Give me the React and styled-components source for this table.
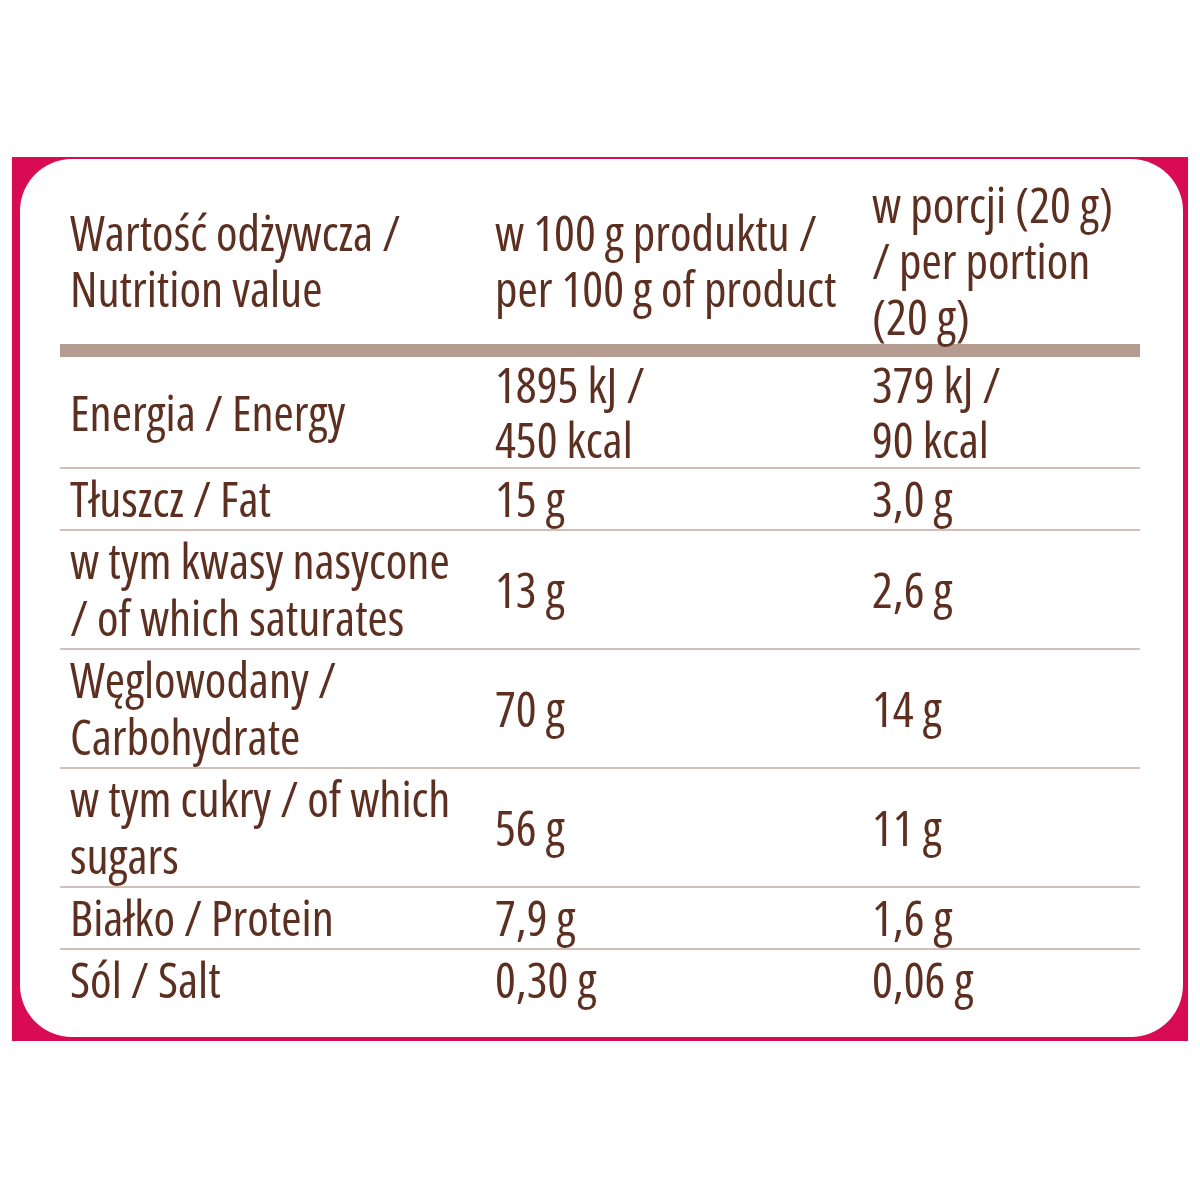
import React from 'react';
import styled, {createGlobalStyle} from 'styled-components';

const GlobalStyle = createGlobalStyle`
  body {
    margin: 0;
    background: #ffffff;
  }
`;

const rows = [
    {name: ['Energia / Energy'], per100: ['1895 kJ /', '450 kcal'], portion: ['379 kJ /', '90 kcal'], tight: true},
    {name: ['Tłuszcz / Fat'], per100: ['15 g'], portion: ['3,0 g']},
    {name: ['w tym kwasy nasycone', '/ of which saturates'], per100: ['13 g'], portion: ['2,6 g']},
    {name: ['Węglowodany /', 'Carbohydrate'], per100: ['70 g'], portion: ['14 g']},
    {name: ['w tym cukry / of which', 'sugars'], per100: ['56 g'], portion: ['11 g']},
    {name: ['Białko / Protein'], per100: ['7,9 g'], portion: ['1,6 g']},
    {name: ['Sól / Salt'], per100: ['0,30 g'], portion: ['0,06 g']},
];

const Lines = ({lines}) => lines.map((line, i) => <Line key={i}>{line}</Line>);

const App = () => {
    return (
        <Page>
            <GlobalStyle/>
            <Frame>
                <Card>
                    <Table>
                        <colgroup>
                            <col style={{width: 425}}/>
                            <col style={{width: 377}}/>
                            <col style={{width: 278}}/>
                        </colgroup>
                        <thead>
                            <tr>
                                <HeadCell><Lines lines={['Wartość odżywcza /', 'Nutrition value']}/></HeadCell>
                                <HeadCell><Lines lines={['w 100 g produktu /', 'per 100 g of product']}/></HeadCell>
                                <HeadCell><Lines lines={['w porcji (20 g)', '/ per portion', '(20 g)']}/></HeadCell>
                            </tr>
                        </thead>
                        <tbody>
                            {rows.map((row, rowIndex) => (
                                <Row key={rowIndex} isLast={rowIndex === rows.length - 1} tight={row.tight}>
                                    <Cell><Lines lines={row.name}/></Cell>
                                    <Cell><Lines lines={row.per100}/></Cell>
                                    <Cell><Lines lines={row.portion}/></Cell>
                                </Row>
                            ))}
                        </tbody>
                    </Table>
                </Card>
            </Frame>
        </Page>
    );
};

export default App;

const Page = styled.div`
  padding: 157px 12px 0;
`;

const Frame = styled.div`
  width: 1176px;
  height: 884px;
  box-sizing: border-box;
  padding: 2px 5px 4px 8px;
  background: #d90b53;
`;

const Card = styled.div`
  height: 100%;
  box-sizing: border-box;
  padding: 17px 43px 0 40px;
  background: #ffffff;
  border-radius: 52px;
`;

const Table = styled.table`
  width: 1080px;
  border-collapse: collapse;
  table-layout: fixed;
  font-family: "Open Sans", "Liberation Sans", sans-serif;
  font-stretch: 80%;
  font-weight: 400;
  font-size: 49px;
  color: #5c2f20;
`;

const HeadCell = styled.th`
  padding: 0 0 0 10px;
  text-align: left;
  font-weight: 400;
  vertical-align: middle;
  border-bottom: 13px solid #b59b90;
`;

const Row = styled.tr`
  border-bottom: ${({isLast}) => (isLast ? 'none' : '2px solid #d3bfb7')};

  td {
    padding: ${({tight}) => (tight ? '0 0 0 10px' : '1px 0 2px 10px')};
  }

  div {
    line-height: ${({tight}) => (tight ? '55px' : '57px')};
  }
`;

const Cell = styled.td`
  vertical-align: middle;
`;

const Line = styled.div`
  line-height: 56px;
  white-space: nowrap;
`;
